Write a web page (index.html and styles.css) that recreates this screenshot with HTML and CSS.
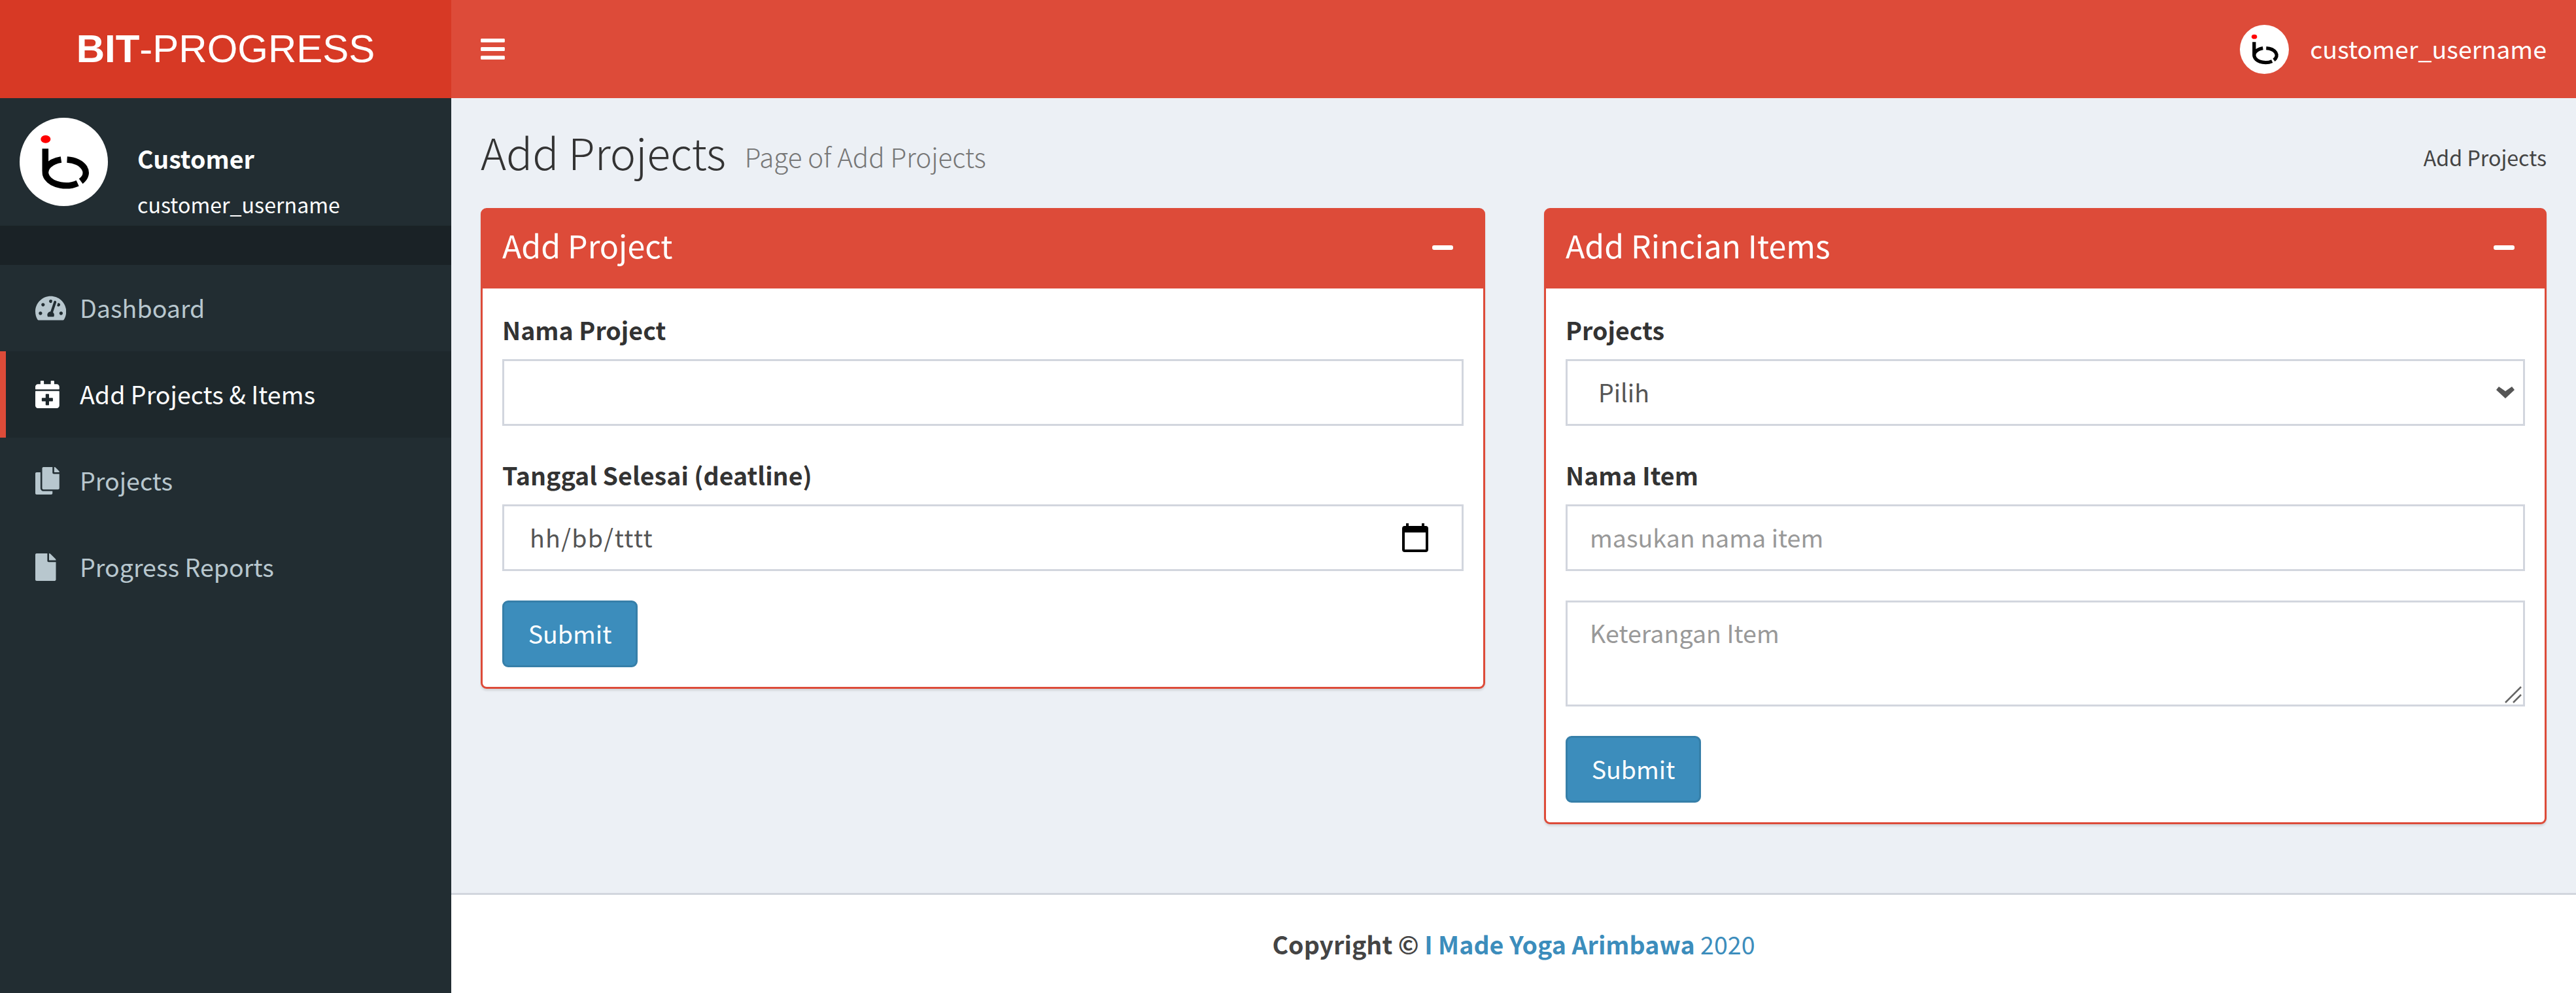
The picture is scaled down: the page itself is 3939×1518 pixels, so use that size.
FILE: index.html
```html
<!DOCTYPE html>
<html>
<head>
    <title>Add Projects</title>
    <link rel="stylesheet" href="styles.css">
</head>
<body>
    <svg class="defs">
        <symbol id="logo" viewBox="0 0 134 134">
            <circle cx="67" cy="67" r="67" fill="#fff"/>
            <ellipse cx="39.5" cy="32.5" rx="7.5" ry="6" fill="#f00"/>
            <path d="M39 47V82M63 63.5A31 20 0 1 0 88 99.3M72 63.5A31 20 0 0 1 93 96.4" fill="none" stroke="#000" stroke-width="9.5"/>
        </symbol>
    </svg>

    <header class="topbar">
        <a class="brand"><b>BIT</b>-PROGRESS</a>
        <div class="navbar">
            <svg class="bars" viewBox="0 0 448 512"><path d="M16 132h416c8.837 0 16-7.163 16-16V76c0-8.837-7.163-16-16-16H16C7.163 60 0 67.163 0 76v40c0 8.837 7.163 16 16 16zm0 160h416c8.837 0 16-7.163 16-16v-40c0-8.837-7.163-16-16-16H16c-8.837 0-16 7.163-16 16v40c0 8.837 7.163 16 16 16zm0 160h416c8.837 0 16-7.163 16-16v-40c0-8.837-7.163-16-16-16H16c-8.837 0-16 7.163-16 16v40c0 8.837 7.163 16 16 16z"/></svg>
            <div class="nav-user">
                <svg class="nav-avatar"><use href="#logo"/></svg>
                <span class="nav-name">customer_username</span>
            </div>
        </div>
    </header>

    <div class="layout">
        <aside class="sidebar">
            <div class="user-panel">
                <svg class="user-avatar"><use href="#logo"/></svg>
                <div class="user-info">
                    <p class="user-role">Customer</p>
                    <p class="user-name">customer_username</p>
                </div>
            </div>
            <div class="menu-header"></div>
            <ul class="menu">
                <li><a><span class="menu-icon"><svg viewBox="0 0 576 512"><path d="M288 32C128.94 32 0 160.94 0 320c0 52.8 14.25 102.26 39.06 144.8 5.61 9.62 16.3 15.2 27.44 15.2h443c11.14 0 21.83-5.58 27.44-15.2C561.75 422.26 576 372.8 576 320c0-159.06-128.94-288-288-288zm0 64c14.71 0 26.58 10.13 30.32 23.65-1.11 2.26-2.64 4.23-3.45 6.67l-9.22 27.67c-5.13 3.49-10.97 6.01-17.64 6.01-17.67 0-32-14.33-32-32S270.33 96 288 96zM96 384c-17.67 0-32-14.33-32-32s14.33-32 32-32 32 14.33 32 32-14.33 32-32 32zm48-160c-17.67 0-32-14.33-32-32s14.33-32 32-32 32 14.33 32 32-14.33 32-32 32zm246.77-72.41l-61.33 184C343.13 347.33 352 364.54 352 384c0 11.72-3.38 22.55-8.88 32H232.88c-5.5-9.45-8.88-20.28-8.88-32 0-33.94 26.5-61.43 59.9-63.59l61.34-184.01c4.17-12.56 17.73-19.45 30.36-15.17 12.57 4.19 19.35 17.79 15.17 30.36zm14.66 57.2l15.52-46.55c3.47-1.29 7.13-2.23 11.05-2.23 17.67 0 32 14.33 32 32s-14.33 32-32 32c-11.38-.01-20.89-6.28-26.57-15.22zM480 384c-17.67 0-32-14.33-32-32s14.33-32 32-32 32 14.33 32 32-14.33 32-32 32z"/></svg></span>Dashboard</a></li>
                <li class="active"><a><span class="menu-icon"><svg viewBox="0 0 448 512"><path d="M436 160H12c-6.6 0-12-5.4-12-12v-36c0-26.5 21.5-48 48-48h48V12c0-6.6 5.4-12 12-12h40c6.6 0 12 5.4 12 12v52h128V12c0-6.6 5.4-12 12-12h40c6.6 0 12 5.4 12 12v52h48c26.5 0 48 21.5 48 48v36c0 6.6-5.4 12-12 12zM12 192h424c6.6 0 12 5.4 12 12v260c0 26.5-21.5 48-48 48H48c-26.5 0-48-21.5-48-48V204c0-6.6 5.4-12 12-12zm316 140c0-6.6-5.4-12-12-12h-60v-60c0-6.6-5.4-12-12-12h-40c-6.6 0-12 5.4-12 12v60h-60c-6.6 0-12 5.4-12 12v40c0 6.6 5.4 12 12 12h60v60c0 6.6 5.4 12 12 12h40c6.6 0 12-5.4 12-12v-60h60c6.6 0 12-5.4 12-12v-40z"/></svg></span>Add Projects &amp; Items</a></li>
                <li><a><span class="menu-icon"><svg viewBox="0 0 448 512"><path d="M320 448v40c0 13.255-10.745 24-24 24H24c-13.255 0-24-10.745-24-24V120c0-13.255 10.745-24 24-24h72v296c0 30.879 25.121 56 56 56h168zm0-344V0H152c-13.255 0-24 10.745-24 24v368c0 13.255 10.745 24 24 24h272c13.255 0 24-10.745 24-24V128H344c-13.2 0-24-10.8-24-24zm120.971-31.029L375.029 7.029A24 24 0 0 0 358.059 0H352v96h96v-6.059a24 24 0 0 0-7.029-16.97z"/></svg></span>Projects</a></li>
                <li><a><span class="menu-icon"><svg viewBox="0 0 384 512"><path d="M224 136V0H24C10.7 0 0 10.7 0 24v464c0 13.3 10.7 24 24 24h336c13.3 0 24-10.7 24-24V160H248c-13.2 0-24-10.8-24-24zm160-14.1v6.1H256V0h6.1c6.4 0 12.5 2.5 17 7l97.9 98c4.5 4.5 7 10.6 7 16.9z"/></svg></span>Progress Reports</a></li>
            </ul>
        </aside>

        <div class="wrapper">
            <main class="main">
                <section class="content-header">
                    <h1>Add Projects <small>Page of Add Projects</small></h1>
                    <span class="breadcrumb">Add Projects</span>
                </section>
                <section class="content">
                    <div class="box">
                        <div class="box-header">
                            <h3>Add Project</h3>
                            <span class="box-minus"></span>
                        </div>
                        <form class="box-body">
                            <div class="form-group">
                                <label>Nama Project</label>
                                <input class="form-control" type="text">
                            </div>
                            <div class="form-group">
                                <label>Tanggal Selesai (deatline)</label>
                                <div class="field">
                                    <input class="form-control date" type="text" value="hh/bb/tttt">
                                    <svg class="date-icon" viewBox="0 0 40 44"><path d="M6 0h4v4h20V0h4v4h2a4 4 0 0 1 4 4v32a4 4 0 0 1-4 4H4a4 4 0 0 1-4-4V8a4 4 0 0 1 4-4h2zM4 14v26h32V14z" fill-rule="evenodd"/></svg>
                                </div>
                            </div>
                            <button class="btn" type="button">Submit</button>
                        </form>
                    </div>

                    <div class="box">
                        <div class="box-header">
                            <h3>Add Rincian Items</h3>
                            <span class="box-minus"></span>
                        </div>
                        <form class="box-body">
                            <div class="form-group">
                                <label>Projects</label>
                                <div class="field">
                                    <select class="form-control pick">
                                        <option>Pilih</option>
                                    </select>
                                    <svg class="pick-icon" viewBox="0 0 28 18"><path d="M0 5l4-5 10 7 10-7 4 5-14 13z" fill="#555"/></svg>
                                </div>
                            </div>
                            <div class="form-group">
                                <label>Nama Item</label>
                                <input class="form-control" type="text" placeholder="masukan nama item">
                            </div>
                            <div class="form-group">
                                <div class="field">
                                    <textarea class="form-control note" placeholder="Keterangan Item"></textarea>
                                    <svg class="grip-icon" viewBox="0 0 26 26"><path d="M1 25L25 1M13 25L25 13" stroke="#666" stroke-width="2.5"/></svg>
                                </div>
                            </div>
                            <button class="btn" type="button">Submit</button>
                        </form>
                    </div>
                </section>
            </main>
            <footer class="footer"><b>Copyright © <a>I Made Yoga Arimbawa</a></b> <a>2020</a></footer>
        </div>
    </div>
</body>
</html>
```

FILE: styles.css
```css
* {
    box-sizing: border-box;
}
html, body {
    height: 100%;
}
body {
    margin: 0;
    display: flex;
    flex-direction: column;
    font-family: "Noto Sans CJK SC", "Noto Sans", sans-serif;
    font-size: 37.6px;
    line-height: 60px;
    color: #333;
    background-color: #ecf0f5;
}
.defs {
    display: none;
}

/* top bar */
.topbar {
    display: flex;
    height: 150px;
    flex-shrink: 0;
    color: white;
}
.brand {
    width: 690px;
    background: #d73925;
    font-family: "Liberation Sans", Arial, sans-serif;
    font-size: 60px;
    line-height: 150px;
    text-align: center;
}
.navbar {
    flex: 1;
    display: flex;
    align-items: center;
    justify-content: space-between;
    padding: 0 45px;
    background: #dd4b39;
}
.bars {
    width: 37px;
    height: 42px;
    fill: white;
}
.nav-user {
    display: flex;
    align-items: center;
    gap: 32px;
}
.nav-avatar {
    width: 75px;
    height: 75px;
}
.nav-name {
    padding-bottom: 3px;
}

/* sidebar */
.layout {
    flex: 1;
    display: flex;
    min-height: 0;
}
.sidebar {
    width: 690px;
    flex-shrink: 0;
    background: #222d32;
}
.user-panel {
    height: 195px;
    display: flex;
    padding: 30px;
    gap: 45px;
    color: white;
}
.user-avatar {
    width: 135px;
    height: 135px;
}
.user-info p {
    margin: 0;
}
.user-role {
    font-weight: 700;
    padding-top: 32px;
    margin-bottom: 15px !important;
}
.user-name {
    font-size: 32.2px;
    line-height: 50px;
}
.menu-header {
    height: 60px;
    background: #1a2226;
}
.menu {
    list-style: none;
    margin: 0;
    padding: 0;
}
.menu a {
    display: flex;
    align-items: center;
    height: 132px;
    padding-left: 54px;
    padding-bottom: 3px;
    color: #b8c7ce;
}
.menu-icon {
    display: flex;
    width: 68px;
    flex-shrink: 0;
    padding-top: 3px;
}
.menu-icon svg {
    height: 42px;
    fill: #b8c7ce;
}
.menu .active a {
    color: white;
    background: #1e282c;
    border-left: 9px solid #dd4b39;
    padding-left: 45px;
}
.menu .active svg {
    fill: white;
}

/* main */
.wrapper {
    flex: 1;
    display: flex;
    flex-direction: column;
}
.main {
    flex: 1;
}
.content-header {
    display: flex;
    justify-content: space-between;
    align-items: flex-start;
    height: 123px;
    padding: 42px 45px 0;
}
.content-header h1 {
    margin: 0;
    font-size: 66.4px;
    font-weight: 300;
    line-height: 78px;
}
.content-header small {
    font-size: 40.3px;
    font-weight: 300;
    line-height: 1;
    color: #777;
    padding-left: 14px;
    vertical-align: 4px;
}
.breadcrumb {
    margin-top: 18px;
    font-size: 32.2px;
    color: #444;
}
.content {
    display: grid;
    grid-template-columns: 1536px 1fr;
    gap: 90px;
    align-items: start;
    padding: 45px;
}
.box {
    border: 3px solid #dd4b39;
    border-radius: 9px;
    background: white;
    box-shadow: 0 3px 3px rgba(0,0,0,0.1);
}
.box-header {
    display: flex;
    align-items: center;
    justify-content: space-between;
    height: 120px;
    padding: 0 30px;
    color: white;
    background: #dd4b39;
}
.box-header h3 {
    margin: 0 0 14px;
    font-size: 48.3px;
    font-weight: 400;
}
.box-minus {
    width: 32px;
    height: 7px;
    margin: 0 16px 6px 0;
    background: white;
    border-radius: 3px;
}
.box-body {
    padding: 33px 30px 30px;
}
.form-group {
    margin-bottom: 45px;
}
label {
    display: block;
    font-weight: 700;
    margin-bottom: 15px;
}
.field {
    position: relative;
}
.form-control {
    display: block;
    width: 100%;
    height: 102px;
    padding: 0 34px 3px;
    border: 3px solid #d2d6de;
    border-radius: 0;
    outline: none;
    background: white;
    color: #555;
    font: inherit;
}
.form-control::placeholder {
    color: #999;
}
.date {
    padding-left: 39px;
    letter-spacing: 1.3px;
}
.pick {
    appearance: none;
    padding-left: 47px;
}
.note {
    height: 162px;
    padding-top: 16px;
    line-height: 60px;
    resize: none;
}
.date-icon {
    position: absolute;
    right: 54px;
    top: 29px;
    width: 40px;
    height: 44px;
}
.pick-icon {
    position: absolute;
    right: 16px;
    top: 42px;
    width: 28px;
    height: 18px;
}
.grip-icon {
    position: absolute;
    right: 5px;
    bottom: 5px;
    width: 26px;
    height: 26px;
}
.btn {
    display: block;
    width: 207px;
    height: 102px;
    padding: 0 0 3px;
    border: 3px solid #367fa9;
    border-radius: 9px;
    background: #3c8dbc;
    color: white;
    font: inherit;
}

/* footer */
.footer {
    height: 153px;
    flex-shrink: 0;
    border-top: 3px solid #d2d6de;
    background: white;
    color: #444;
    line-height: 150px;
    text-align: center;
}
.footer a {
    color: #3c8dbc;
}
```
